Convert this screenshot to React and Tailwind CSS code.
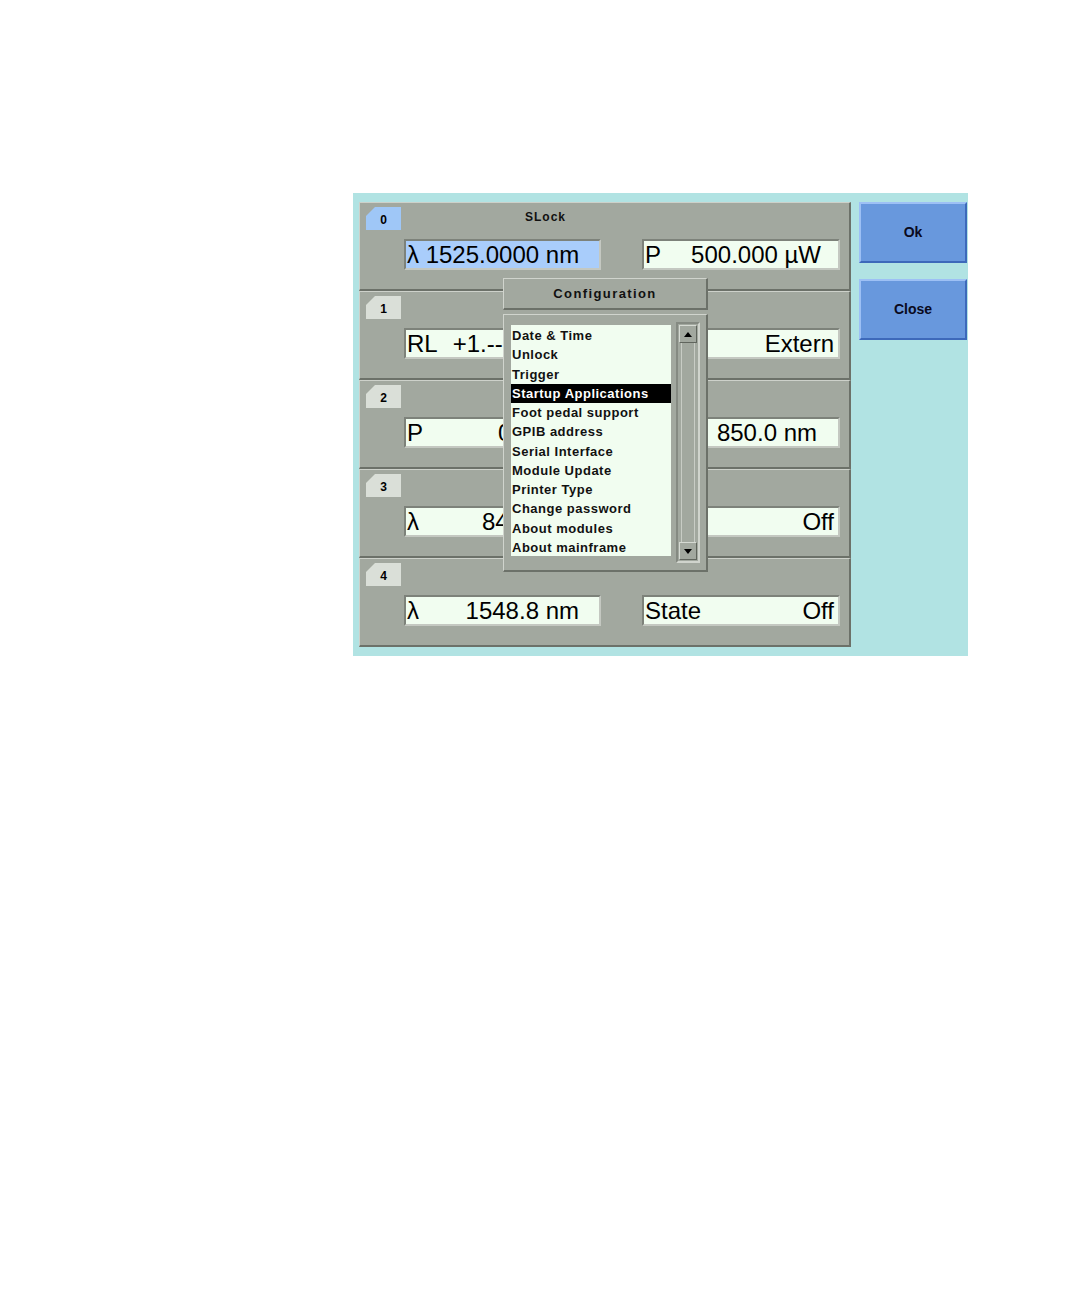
import React from "react";

const items = [
  "Date & Time",
  "Unlock",
  "Trigger",
  "Startup Applications",
  "Foot pedal support",
  "GPIB address",
  "Serial Interface",
  "Module Update",
  "Printer Type",
  "Change password",
  "About modules",
  "About mainframe",
];

function Tab({ n, active }) {
  return (
    <div
      className={
        "w-[35px] h-[23px] flex items-center justify-center text-[12px] font-bold text-black [clip-path:polygon(9px_0,100%_0,100%_100%,0_100%,0_9px)] " +
        (active ? "bg-[#9fc7f7]" : "bg-[#dadfd8]")
      }
    >
      <span className="mt-[2px]">{n}</span>
    </div>
  );
}

const fieldBase =
  "h-[31px] flex items-center border-2 border-t-[#7d827a] border-l-[#7d827a] border-b-[#c4c8c1] border-r-[#c4c8c1] text-[24px] leading-[28px] text-black ";

function Field({ active, label, value, pr, w }) {
  return (
    <div
      className={fieldBase + "justify-between " + (active ? "bg-[#a9cdfb]" : "bg-[#f1fdf0]")}
      style={{ width: w, paddingRight: pr }}
    >
      <span className="pl-[1px] whitespace-pre">{label}</span>
      <span className="whitespace-pre">{value}</span>
    </div>
  );
}

function ClipField({ label, value, gap, w }) {
  return (
    <div className={fieldBase + "bg-[#f1fdf0]"} style={{ width: w }}>
      <div className="w-[97px] h-[28px] overflow-hidden flex items-center whitespace-pre">
        <span className="pl-[1px]">{label}</span>
        <span style={{ marginLeft: gap }}>{value}</span>
      </div>
    </div>
  );
}

function Row({ n, active, title, l, r, clip }) {
  return (
    <div className="h-[89px] bg-[#a2a89f] border-t border-l border-t-[#cdd1ca] border-l-[#cdd1ca] border-b-2 border-r-2 border-b-[#6c7169] border-r-[#6c7169]">
      <div className="flex items-center pt-[4px] pl-[6px]">
        <Tab n={n} active={active} />
        {title && (
          <span className="ml-[124px] text-[12px] font-bold tracking-[1px] text-[#111] -mt-[4px]">
            {title}
          </span>
        )}
      </div>
      <div className="flex pl-[44px] mt-[9px]">
        {clip ? <ClipField w={197} {...l} /> : <Field active={active} w={197} {...l} />}
        <div className="w-[41px]" />
        <Field w={198} {...r} />
      </div>
    </div>
  );
}

function Button({ children, mt }) {
  return (
    <div
      className="w-[108px] h-[61px] flex items-center justify-center bg-[#6898dd] border-2 border-t-[#9dc0f5] border-l-[#9dc0f5] border-b-[#3d69ba] border-r-[#3d69ba] text-[14px] font-bold text-[#0a0a20]"
      style={{ marginTop: mt }}
    >
      {children}
    </div>
  );
}

export default function App() {
  return (
    <div className="w-[1080px] h-[1296px] bg-white font-['Liberation_Sans',Arial,sans-serif] pl-[353px] pt-[193px]">
      <div className="relative w-[615px] h-[463px] bg-[#b1e3e3] flex">
        <div className="ml-[6px] mt-[9px] w-[492px] flex flex-col">
          <Row
            n="0"
            active
            title="SLock"
            l={{ label: "λ 1525.0000 nm", value: "", pr: 0 }}
            r={{ label: "P", value: "500.000 µW", pr: 17 }}
          />
          <Row
            n="1"
            clip
            l={{ label: "RL", value: "+1.---", gap: 15 }}
            r={{ label: "", value: "Extern", pr: 4 }}
          />
          <Row
            n="2"
            clip
            l={{ label: "P", value: "0", gap: 75 }}
            r={{ label: "", value: "850.0 nm", pr: 21 }}
          />
          <Row
            n="3"
            clip
            l={{ label: "λ", value: "84", gap: 63 }}
            r={{ label: "", value: "Off", pr: 4 }}
          />
          <Row
            n="4"
            l={{ label: "λ", value: "1548.8 nm", pr: 20 }}
            r={{ label: "State", value: "Off", pr: 4 }}
          />
        </div>
        <div className="ml-[8px] mt-[9px] flex flex-col">
          <Button mt={0}>Ok</Button>
          <Button mt={16}>Close</Button>
        </div>

        {/* Configuration dialog */}
        <div className="absolute left-[150px] top-[85px] w-[205px]">
          <div className="h-[32px] flex items-center justify-center bg-[#a2a89f] border border-t-[#d0d4cd] border-l-[#d0d4cd] border-b-2 border-r-2 border-b-[#6c7169] border-r-[#6c7169] text-[13px] font-bold tracking-[1.4px] text-[#111]">
            Configuration
          </div>
          <div className="mt-[4px] h-[258px] bg-[#a2a89f] border border-t-[#d0d4cd] border-l-[#d0d4cd] border-b-2 border-r-2 border-b-[#6c7169] border-r-[#6c7169] flex pl-[7px] pt-[7px]">
            <div className="mt-[3px] w-[160px] h-[231px] bg-[#f1fdf0] pt-[1px]">
              {items.map((t, i) => (
                <div
                  key={t}
                  className={
                    "h-[19.25px] flex items-center pl-[1px] text-[13px] font-bold tracking-[0.5px] leading-none whitespace-nowrap " +
                    (i === 3 ? "bg-black text-white" : "text-[#111]")
                  }
                >
                  {t}
                </div>
              ))}
            </div>
            <div className="ml-[5px] w-[24px] h-[241px] border-2 border-t-[#858a82] border-l-[#858a82] border-b-[#d0d4cd] border-r-[#d0d4cd] bg-[#a2a89f] flex flex-col p-[1px]">
              <div className="h-[18px] border border-t-[#d6dad3] border-l-[#d6dad3] border-b-[#60655d] border-r-[#60655d] flex items-center justify-center">
                <svg width="8" height="5" viewBox="0 0 8 5">
                  <polygon points="4,0 8,5 0,5" fill="#000" />
                </svg>
              </div>
              <div className="flex-1 mx-[2px] border-x border-x-[#c8ccc5]" />
              <div className="h-[18px] border border-t-[#d6dad3] border-l-[#d6dad3] border-b-[#60655d] border-r-[#60655d] flex items-center justify-center">
                <svg width="8" height="5" viewBox="0 0 8 5">
                  <polygon points="0,0 8,0 4,5" fill="#000" />
                </svg>
              </div>
            </div>
          </div>
        </div>
      </div>
    </div>
  );
}
